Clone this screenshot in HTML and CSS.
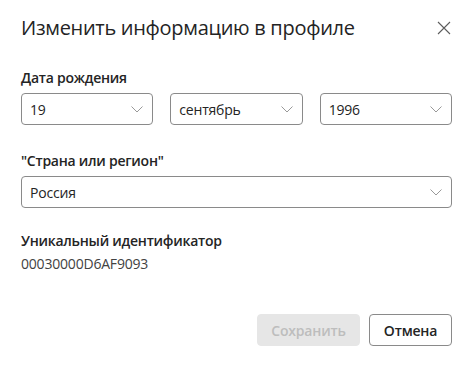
FILE: index.html
```html
<!DOCTYPE html>
<html lang="ru">
<head>
    <meta charset="UTF-8">
    <meta name="viewport" content="width=device-width, initial-scale=1.0">
    <title>Изменить информацию в профиле</title>
    <link rel="stylesheet" href="styles.css">
</head>
<body>
    <div class="dialog">
        <div class="header">
            <h1>Изменить информацию в профиле</h1>
            <button class="close" aria-label="Закрыть">
                <svg width="14" height="14" viewBox="0 0 14 14">
                    <path d="M1 1 L13 13 M13 1 L1 13" stroke="#5c5c5c" stroke-width="1.1" fill="none"/>
                </svg>
            </button>
        </div>

        <div class="field">
            <div class="label">Дата рождения</div>
            <div class="date-row">
                <div class="select">
                    <span>19</span>
                    <svg class="chevron" width="12" height="7" viewBox="0 0 12 7"><path d="M0.5 0.5 L6 6 L11.5 0.5" stroke="#999" fill="none"/></svg>
                </div>
                <div class="select">
                    <span>сентябрь</span>
                    <svg class="chevron" width="12" height="7" viewBox="0 0 12 7"><path d="M0.5 0.5 L6 6 L11.5 0.5" stroke="#999" fill="none"/></svg>
                </div>
                <div class="select">
                    <span>1996</span>
                    <svg class="chevron" width="12" height="7" viewBox="0 0 12 7"><path d="M0.5 0.5 L6 6 L11.5 0.5" stroke="#999" fill="none"/></svg>
                </div>
            </div>
        </div>

        <div class="field">
            <div class="label">"Страна или регион"</div>
            <div class="select">
                <span>Россия</span>
                <svg class="chevron" width="12" height="7" viewBox="0 0 12 7"><path d="M0.5 0.5 L6 6 L11.5 0.5" stroke="#999" fill="none"/></svg>
            </div>
        </div>

        <div class="field field-id">
            <div class="label">Уникальный идентификатор</div>
            <div class="value">00030000D6AF9093</div>
        </div>

        <div class="actions">
            <button class="btn btn-disabled" disabled>Сохранить</button>
            <button class="btn btn-cancel">Отмена</button>
        </div>
    </div>
</body>
</html>
```

FILE: styles.css
```css
body {
    margin: 0;
    background: #fff;
    font-family: "Open Sans", "Noto Sans", Arial, sans-serif;
    color: #242424;
}
.dialog {
    width: 474px;
    height: 365px;
    box-sizing: border-box;
    padding: 14px 22px 0 21px;
}
.header {
    display: flex;
    justify-content: space-between;
    align-items: center;
    height: 28px;
}
h1 {
    margin: 0;
    font-size: 20px;
    font-weight: 400;
    line-height: 28px;
    letter-spacing: -0.3px;
    color: #242424;
}
.close {
    background: none;
    border: none;
    padding: 0;
    width: 14px;
    height: 14px;
    margin-right: 1px;
    display: flex;
}
.field {
    margin-top: 26px;
}
.label {
    font-size: 14px;
    font-weight: 600;
    line-height: 20px;
    letter-spacing: -0.25px;
    margin-bottom: 5px;
}
.date-row {
    display: grid;
    grid-template-columns: repeat(3, 1fr);
    gap: 17px;
}
.select {
    height: 32px;
    box-sizing: border-box;
    border: 1px solid #8a8a8a;
    border-radius: 4px;
    display: flex;
    align-items: center;
    justify-content: space-between;
    padding: 0 8px 0 8px;
    font-size: 14px;
    letter-spacing: -0.2px;
}
.chevron {
    margin-right: 1px;
}
.field-id {
    margin-top: 23px;
}
.field-id .label {
    margin-bottom: 3px;
}
.value {
    font-size: 14px;
    color: #424242;
    line-height: 20px;
    letter-spacing: -0.2px;
}
.actions {
    display: flex;
    justify-content: flex-end;
    gap: 9px;
    margin-top: 40px;
}
.btn {
    font-family: inherit;
    font-size: 14px;
    font-weight: 600;
    height: 32px;
    border-radius: 4px;
    box-sizing: border-box;
    letter-spacing: -0.2px;
}
.btn-disabled {
    width: 103px;
    background: #e6e6e6;
    border: 1px solid #e6e6e6;
    color: #bdbdbd;
}
.btn-cancel {
    width: 83px;
    background: #fff;
    border: 1px solid #8a8a8a;
    color: #242424;
}
```
